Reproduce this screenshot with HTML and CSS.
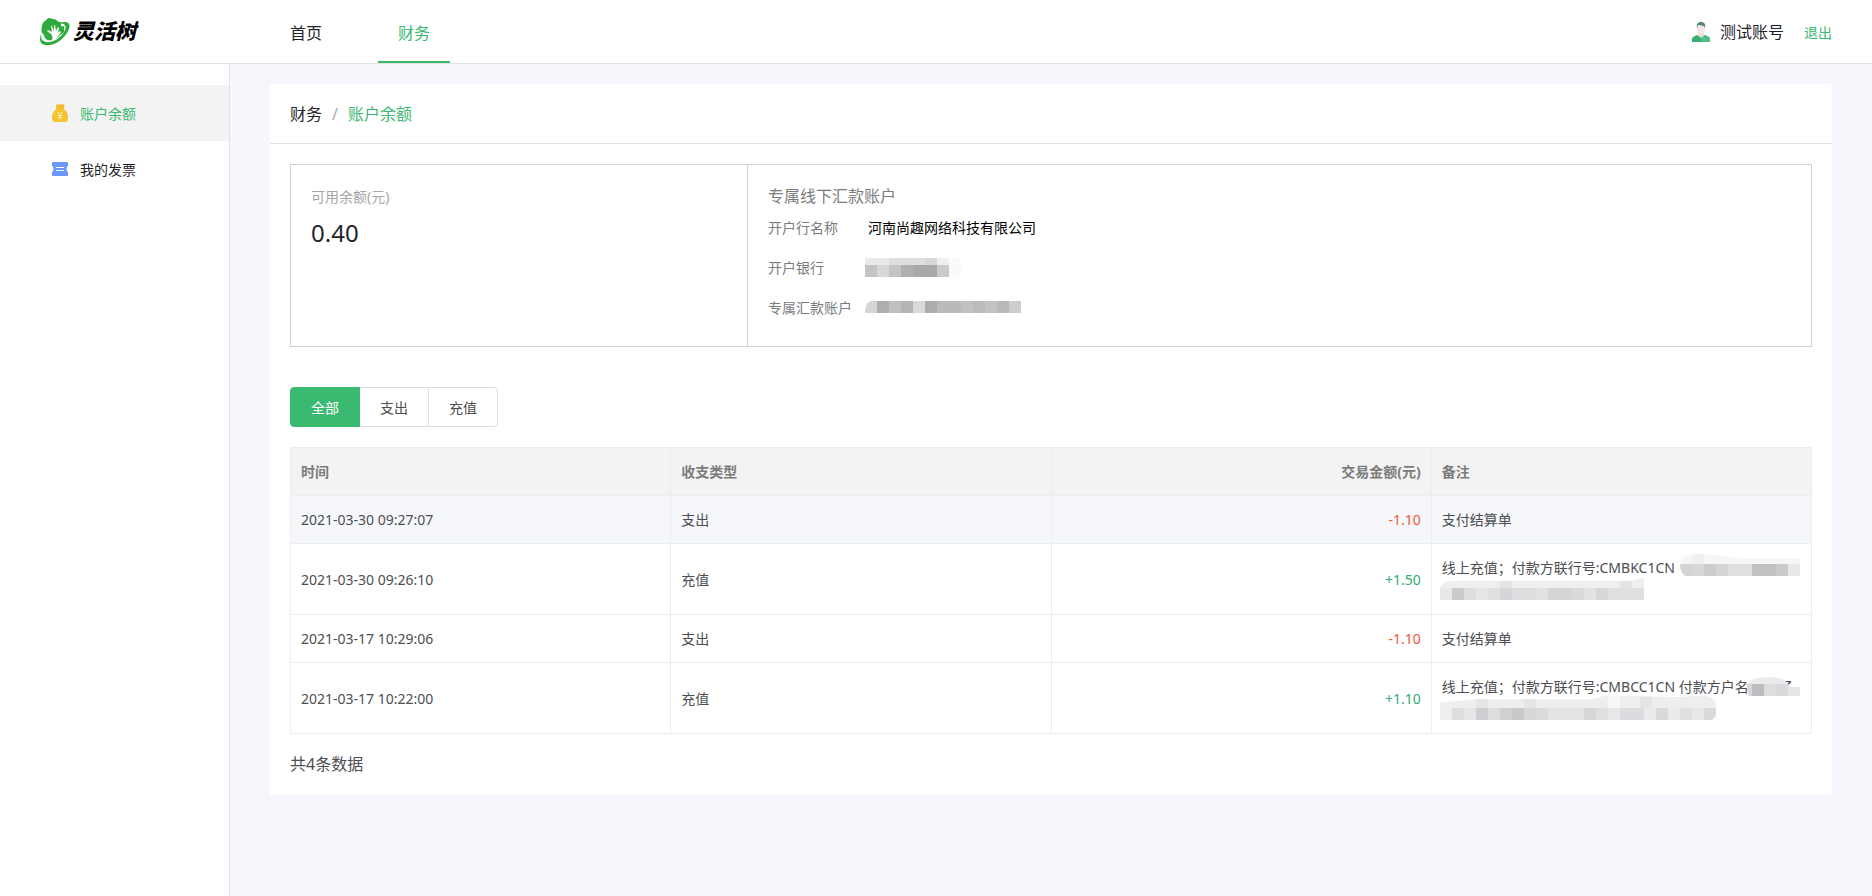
FILE: index.html
```html
<!DOCTYPE html>
<html lang="zh-CN">
<head>
<meta charset="utf-8">
<title>灵活树 - 账户余额</title>
<link rel="stylesheet" href="styles.css">
</head>
<body>
<header class="header">
  <a class="logo" href="#">
    <svg class="logo-mark" viewBox="0 0 30 28" aria-hidden="true">
      <path d="M2 8C3 3 6 3 7 1c2-2 4 0 6 0 3 0 4 2 6 3 4 0 6 3 5 6 1 4-1 6-4 7-1 4-4 6-8 5-4 1-8-1-8-5-3-2-3-6-2-9z" fill="#2faa3c"/>
      <path d="M12 22c1-3 0-5-1-6l-4-3 1-1 4 2-1-6 1 0 2 5 0-6h1l1 6 2-4 1 1-1 5 2-2 1 1-3 5c-2 2-1 2 0 3z" fill="#fff"/>
      <path d="M21 7c7-2 8 2 4 8-5 7-14 11-19 10-3-1-4-4-3-8" fill="none" stroke="#fff" stroke-width="3"/>
      <path d="M20 5c8-3 12 1 8 8C24 22 12 29 5 27 0 26-1 22 1 16c0 5 1 7 5 8 6 1 14-3 18-10 3-5 2-8-4-9z" fill="#2faa3c"/>
    </svg>
    <span class="logo-text">灵活树</span>
  </a>
  <nav class="nav">
    <a class="nav-item" href="#">首页</a>
    <a class="nav-item active" href="#">财务</a>
  </nav>
  <div class="user">
    <svg class="avatar" viewBox="0 0 18 20" aria-hidden="true">
      <path d="M0 20v-3c0-2 2-3 6-4l3 2 3-2c4 1 6 2 6 4v3z" fill="#37ae70"/>
      <path d="M9 15l3-2c4 1 6 2 6 4v3H9z" fill="#4fbd87"/>
      <path d="M6 10h6v4l-3 2-3-2z" fill="#e5d6d6"/>
      <path d="M5 4h8v4c0 3-2 5-4 5s-4-2-4-5z" fill="#f3e6e6"/>
      <path d="M5 6C4 2 6 0 9 0s5 2 4 6l-1-2-6-1z" fill="#58807d"/>
    </svg>
    <span class="user-name">测试账号</span>
    <a class="logout" href="#">退出</a>
  </div>
</header>
<div class="body">
  <aside class="sidebar">
    <a class="side-item active" href="#">
      <svg class="side-icon" viewBox="0 0 16 18" aria-hidden="true">
        <path d="M4 1c1-1 2 0 3-.5C8 0 9 0 10 .5 11 0 12 0 12.500 1L12 5H4.500z" fill="#eebc2c"/>
        <path d="M4.500 5h7.500c3 2 4 5 4 9s-1 4-4 4H4c-3 0-4-1-4-4s1-7 4.500-9z" fill="#f5c430"/>
        <path d="M6 8l2 3 2-3M8 11v4M6 11.500h4M6 13.500h4" fill="none" stroke="#fdf0c4" stroke-width="1"/>
      </svg>
      <span>账户余额</span>
    </a>
    <a class="side-item" href="#">
      <svg class="side-icon" viewBox="0 0 16 18" aria-hidden="true">
        <path d="M1 2h14q1 0 1 1v3q-1.500 .5-1.500 3t1.500 3v3q0 1-1 1H1q-1 0-1-1v-3q1.500-.5 1.500-3T0 6V3q0-1 1-1z" fill="#6b96fb"/>
        <path d="M4 7.500h8M4 10.500h8" stroke="#fff" stroke-width="1"/>
      </svg>
      <span>我的发票</span>
    </a>
  </aside>
  <main class="main">
    <section class="card">
      <div class="crumbs">
        <a href="#">财务</a><span class="slash">/</span><a class="current" href="#">账户余额</a>
      </div>
      <div class="content">
        <div class="summary">
          <div class="balance">
            <div class="label">可用余额(元)</div>
            <div class="amount">0.40</div>
          </div>
          <div class="bank">
            <div class="bank-title">专属线下汇款账户</div>
            <dl class="bank-list">
              <dt>开户行名称</dt><dd>河南尚趣网络科技有限公司</dd>
              <dt>开户银行</dt>
              <dd><svg class="mask mask-bank" width="96" height="19" viewBox="0 0 96 19" shape-rendering="crispEdges" aria-hidden="true">
                <path fill="#e9e9e9" d="M0 0h24v7H0z"/><path fill="#dfdfdf" d="M24 0h36v7H24z"/><path fill="#d7d7d7" d="M60 0h12v7H60z"/><path fill="#efefef" d="M72 0h12v7H72z"/><path fill="#fafafa" d="M84 0h12v19H84z"/>
                <path fill="#c4c4c4" d="M0 7h12v12H0z"/><path fill="#d7d7d7" d="M12 7h12v12H12z"/><path fill="#c4c4c4" d="M24 7h12v12H24z"/><path fill="#b0b0b0" d="M36 7h12v12H36z"/><path fill="#a9a9a9" d="M48 7h24v12H48z"/><path fill="#cacaca" d="M72 7h12v12H72z"/>
              </svg></dd>
              <dt>专属汇款账户</dt>
              <dd><svg class="mask mask-bank" width="156" height="12" viewBox="0 0 156 12" aria-hidden="true">
                <path fill="#d5d5d5" d="M12 0H6Q1 1 0 9v3h12z"/>
                <g shape-rendering="crispEdges"><path fill="#aeaeae" d="M12 0h12v12H12z"/><path fill="#c1c1c1" d="M24 0h12v12H24z"/><path fill="#b5b5b5" d="M36 0h12v12H36z"/><path fill="#dadada" d="M48 0h12v12H48z"/><path fill="#adadad" d="M60 0h12v12H60z"/><path fill="#bababa" d="M72 0h24v12H72z"/><path fill="#c1c1c1" d="M96 0h12v12H96z"/><path fill="#bbb" d="M108 0h12v12h-12z"/><path fill="#c4c4c4" d="M120 0h12v12h-12z"/><path fill="#b9b9b9" d="M132 0h12v12h-12z"/><path fill="#cecece" d="M144 0h12v12h-12z"/></g>
              </svg></dd>
            </dl>
          </div>
        </div>
        <div class="tabs">
          <button class="tab active" type="button">全部</button>
          <button class="tab" type="button">支出</button>
          <button class="tab" type="button">充值</button>
        </div>
        <table class="records">
          <thead>
            <tr><th>时间</th><th>收支类型</th><th class="num">交易金额(元)</th><th>备注</th></tr>
          </thead>
          <tbody>
            <tr class="hover"><td>2021-03-30 09:27:07</td><td>支出</td><td class="num out">-1.10</td><td>支付结算单</td></tr>
            <tr><td>2021-03-30 09:26:10</td><td>充值</td><td class="num in">+1.50</td>
              <td><div class="remark">线上充值；付款方联行号:CMBKC1CN<br>&nbsp;
                <svg class="mask mask-tail" width="132" height="24" viewBox="0 0 132 24" aria-hidden="true">
                  <path fill="#f5f6f6" d="M0 10Q2 0 14 0h10l36 4h60v6z"/><path fill="#eff0f0" d="M12 0h12v10H12z"/>
                  <path fill="#d3d4d6" d="M0 10h12v12H5Q0 18 0 10z"/>
                  <g shape-rendering="crispEdges"><path fill="#d7d8d8" d="M12 10h12v12H12z"/><path fill="#cbccce" d="M24 10h12v12H24z"/><path fill="#d2d4d5" d="M36 10h12v12H36z"/><path fill="#dfe1e1" d="M48 10h24v12H48z"/><path fill="#c0c1c3" d="M72 10h24v12H72z"/><path fill="#cacbcc" d="M96 10h12v12H96z"/><path fill="#e7e9e8" d="M108 10h12v12h-12z"/></g>
                </svg>
                <svg class="mask mask-line" width="204" height="21" viewBox="0 0 204 21" aria-hidden="true">
                  <path fill="#efefef" d="M0 9Q2 3 10 2h182l4-2h8v9z"/><path fill="#e4e4e4" d="M60 2h12v7H60zM180 2h12v7h-12z"/>
                  <g shape-rendering="crispEdges"><path fill="#e9e9e9" d="M0 9h12v12H0z"/><path fill="#c9cacc" d="M12 9h12v12H12z"/><path fill="#dcdddd" d="M24 9h12v12H24z"/><path fill="#e5e7e6" d="M36 9h12v12H36z"/><path fill="#dfe1e0" d="M48 9h12v12H48z"/><path fill="#d5d6d9" d="M60 9h12v12H60z"/><path fill="#dcddde" d="M72 9h24v12H72z"/><path fill="#e2e2e2" d="M96 9h12v12H96z"/><path fill="#d5d6d8" d="M108 9h24v12h-24z"/><path fill="#d9dbda" d="M132 9h12v12h-12z"/><path fill="#e1e3e2" d="M144 9h12v12h-12z"/><path fill="#d6d8d7" d="M156 9h12v12h-12z"/><path fill="#dfe0e0" d="M168 9h36v12h-36z"/></g>
                </svg></div></td></tr>
            <tr><td>2021-03-17 10:29:06</td><td>支出</td><td class="num out">-1.10</td><td>支付结算单</td></tr>
            <tr><td>2021-03-17 10:22:00</td><td>充值</td><td class="num in">+1.10</td>
              <td><div class="remark">线上充值；付款方联行号:CMBCC1CN 付款方户名<span class="last-char">了</span><br>&nbsp;
                <svg class="mask mask-name" width="64" height="24" viewBox="0 0 64 24" aria-hidden="true">
                  <path fill="#fff" d="M30 10h22l12 2v12H30z"/>
                  <path fill="#ebebeb" d="M0 14V8Q4 0 22 0q14 0 18 6l4 4v4z"/>
                  <path fill="#d8d8d9" d="M0 7h5v12H2Q0 15 0 7z"/>
                  <g shape-rendering="crispEdges"><path fill="#bcbdbf" d="M5 7h12v12H5z"/><path fill="#dcddde" d="M17 7h12v12H17z"/><path fill="#d9dadc" d="M29 7h12v12H29z"/><path fill="#e6e8e7" d="M41 10h12v9H41z"/></g>
                </svg>
                <svg class="mask mask-wide" width="284" height="32" viewBox="0 0 284 32" aria-hidden="true">
                  <path fill="#fff" d="M0 10l8-3v25L0 22z"/>
                  <path fill="#eee" d="M8 12V7l36-4h116l12-3h32l40 1 20-1h10q10 1 10 12z"/><path fill="#e5e5e5" d="M44 3h12v9H44zM92 3h12v9H92zM208 1h12v11h-12z"/><path fill="#f7f7f7" d="M176 0h12v12h-12z"/>
                  <g shape-rendering="crispEdges"><path fill="#eee" d="M8 12h12v12H8z"/><path fill="#dcdddd" d="M20 12h12v12H20z"/><path fill="#e5e7e6" d="M32 12h12v12H32z"/><path fill="#cecfd2" d="M44 12h12v12H44z"/><path fill="#dcddde" d="M56 12h12v12H56z"/><path fill="#d0d0d0" d="M68 12h12v12H68z"/><path fill="#c8c9c9" d="M80 12h12v12H80z"/><path fill="#d6d8d7" d="M92 12h12v12H92z"/><path fill="#dadbdc" d="M104 12h12v12h-12z"/><path fill="#e3e5e4" d="M116 12h36v12h-36z"/><path fill="#d6d8d7" d="M152 12h12v12h-12z"/><path fill="#dfe1e0" d="M164 12h12v12h-12z"/><path fill="#e8e8e8" d="M176 12h12v12h-12z"/><path fill="#dbdcdf" d="M188 12h24v12h-24z"/><path fill="#eaecea" d="M212 12h12v12h-12z"/><path fill="#d9dadc" d="M224 12h12v12h-12z"/><path fill="#eaecea" d="M236 12h12v12h-12z"/><path fill="#dfe1e0" d="M248 12h12v12h-12z"/><path fill="#e8e8e8" d="M260 12h12v12h-12z"/></g>
                  <path fill="#dadada" d="M272 12h12v8l-4 4h-8z"/>
                </svg></div></td></tr>
          </tbody>
        </table>
        <div class="total">共4条数据</div>
      </div>
    </section>
  </main>
</div>
</body>
</html>
```

FILE: styles.css
```css
* { box-sizing: border-box; }
body {
  margin: 0;
  min-height: 100vh;
  display: flex;
  flex-direction: column;
  background: #f6f7fc;
  color: #1f2329;
  font: 400 14px/23px "Noto Sans", "Noto Sans CJK SC", sans-serif;
}
a { color: inherit; text-decoration: none; }

.header {
  display: flex;
  height: 64px;
  background: #fff;
  border-bottom: 1px solid #e2e2e2;
}
.logo {
  display: flex;
  align-items: center;
  gap: 3px;
  width: 270px;
  padding-left: 40px;
}
.logo-mark { width: 30px; height: 28px; }
.logo-text {
  color: #000;
  font-size: 21px;
  font-weight: 900;
  font-style: italic;
}
.nav { display: flex; gap: 36px; flex: 1; }
.nav-item {
  height: 63px;
  padding: 0 20px;
  font-size: 16px;
  line-height: 66px;
}
.nav-item.active { color: #3ab971; box-shadow: inset 0 -2px #3ab971; }
.user {
  display: flex;
  align-items: center;
  padding: 2px 40px 0 0;
}
.avatar { width: 18px; height: 20px; margin: 0 10px 2px 0; }
.user-name { margin-right: 20px; font-size: 16px; }
.logout { color: #3ab971; }

.body { display: flex; flex: 1; }
.sidebar {
  width: 230px;
  padding-top: 21px;
  background: #fff;
  border-right: 1px solid #e2e3e8;
}
.side-item {
  display: flex;
  align-items: center;
  gap: 12px;
  height: 56px;
  padding-left: 52px;
}
.side-item.active { background: #f3f3f3; color: #3ab971; }
.side-icon { width: 16px; height: 18px; }

.main { flex: 1; padding: 20px 40px; }
.card { background: #fff; }
.crumbs {
  display: flex;
  gap: 10px;
  padding: 1px 20px 0;
  border-bottom: 1px solid #e2e2e2;
  font-size: 16px;
  line-height: 58px;
}
.crumbs .slash { color: #a8a8a8; }
.crumbs .current { color: #3ab971; }
.content { padding: 20px; }

.summary { display: flex; border: 1px solid #d0d0d0; }
.balance { width: 30%; padding: 20px; }
.balance .label { color: #a6a6a6; }
.amount { font-size: 24px; line-height: 50px; }
.bank {
  flex: 1;
  padding: 20px 20px 19px;
  border-left: 1px solid #d0d0d0;
}
.bank-title { color: #7c7c7c; font-size: 16px; line-height: 22px; }
.bank-list {
  display: grid;
  grid-template-columns: 100px 1fr;
  grid-auto-rows: 40px;
  align-items: center;
  margin: 0;
}
.bank-list dt { color: #7c7c7c; }
.bank-list dd { margin: 0; color: #000; }
.mask { display: block; }
.mask-bank { margin-left: -3px; }

.tabs { display: flex; margin: 40px 0 20px; }
.tab {
  height: 40px;
  padding: 0 20px;
  border: 1px solid #dcdfe6;
  border-left: 0;
  background: #fff;
  color: #4c4e52;
  font: inherit;
}
.tab.active {
  border: 1px solid #3ab971;
  border-radius: 4px 0 0 4px;
  background: #3ab971;
  color: #fff;
}
.tab:last-child { border-radius: 0 4px 4px 0; }

.records {
  width: 100%;
  table-layout: fixed;
  border: solid #ebedf5;
  border-width: 1px 0 0 1px;
  border-spacing: 0;
  color: #4c4e52;
}
.records th,
.records td {
  padding: 12px 10px;
  border: solid #ebedf5;
  border-width: 0 1px 1px 0;
  text-align: left;
}
.records th { background: #f3f3f3; color: #7c7c7c; font-weight: 700; }
.records .hover td { background: #f5f7fb; }
.records .num { text-align: right; }
.records .out { color: #f0563a; }
.records .in { color: #31ad73; }

.remark { position: relative; white-space: nowrap; }
.last-char { margin-left: 30px; }
.remark .mask { position: absolute; }
.mask-tail { left: 238px; top: -2px; }
.mask-line { left: -2px; top: 23px; }
.mask-name { left: 305px; top: 2px; }
.mask-wide { left: -10px; top: 21px; }

.total { margin-top: 20px; color: #4c4e52; font-size: 16px; line-height: 21px; }
```
